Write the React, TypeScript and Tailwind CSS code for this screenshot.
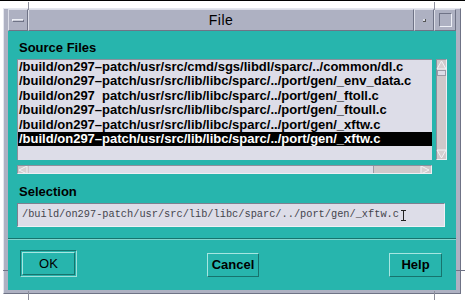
import React from "react";

const files = [
  "/build/on297–patch/usr/src/cmd/sgs/libdl/sparc/../common/dl.c",
  "/build/on297–patch/usr/src/lib/libc/sparc/../port/gen/_env_data.c",
  "/build/on297  patch/usr/src/lib/libc/sparc/../port/gen/_ftoll.c",
  "/build/on297–patch/usr/src/lib/libc/sparc/../port/gen/_ftoull.c",
  "/build/on297–patch/usr/src/lib/libc/sparc/../port/gen/_xftw.c",
  "/build/on297–patch/usr/src/lib/libc/sparc/../port/gen/_xftw.c",
];

const sans = { fontFamily: '"Liberation Sans", Arial, sans-serif' };

function Arrow({ dir }: { dir: "up" | "down" | "left" | "right" }) {
  const pts = {
    up: "1,9 5.5,1 10,9",
    down: "1,1 5.5,9 10,1",
    left: "9,1 1,5 9,9",
    right: "1,1 9,5 1,9",
  }[dir];
  return (
    <svg width="11" height="10" viewBox="0 0 11 10" className="block">
      <polygon points={pts} fill="#d6d0d2" stroke="#f2f2f6" strokeWidth="1" />
    </svg>
  );
}

function TitleButton({ children, className = "" }: { children?: React.ReactNode; className?: string }) {
  return (
    <div
      className={`h-full flex items-center justify-center border-t border-l border-t-[#dcdee8] border-l-[#dcdee8] border-b border-r border-b-[#6f7386] border-r-[#6f7386] ${className}`}
    >
      {children}
    </div>
  );
}

export default function App() {
  return (
    <div className="w-[465px] h-[300px] bg-white border-t border-black relative overflow-hidden" style={sans}>
      {/* window frame */}
      <div className="ml-[3px] mt-[7px] w-[458px] h-[286px] bg-[#aeb1c2] border border-t-[#e4e6ee] border-l-[#e4e6ee] border-b-[#6f7386] border-r-[#6f7386] px-[4px] pb-[3px] flex flex-col">
        {/* title bar */}
        <div className="h-[22px] flex">
          <TitleButton className="w-[20px]">
            <div className="w-[12px] h-[3px] bg-[#c8cad6] border border-t-[#eef0f6] border-l-[#eef0f6] border-b-[#6f7386] border-r-[#6f7386]" />
          </TitleButton>
          <TitleButton className="flex-1">
            <span className="text-[14px] text-black tracking-[0.5px]">File</span>
          </TitleButton>
          <TitleButton className="w-[20px]">
            <div className="w-[3px] h-[3px] bg-[#d8dae4] border-r border-b border-[#555]" />
          </TitleButton>
          <TitleButton className="w-[22px]">
            <div className="w-[13px] h-[14px] border border-t-[#6f7386] border-l-[#6f7386] border-b-[#eef0f6] border-r-[#eef0f6]" />
          </TitleButton>
        </div>

        {/* dialog body */}
        <div className="flex-1 bg-[#27b5ad] px-[9px] flex flex-col text-black">
          <div className="mt-[10px] h-[14px] leading-[14px] text-[13px] font-bold pl-[2px]">Source Files</div>

          <div className="mt-[4px] flex gap-[4px]">
            <div className="w-[415px] h-[101px] bg-[#dddde8] border-t border-l border-[#8d8f9c] overflow-hidden">
              {files.map((f, i) => (
                <div
                  key={i}
                  className={`h-[14.4px] leading-[14.4px] text-[13px] font-bold whitespace-pre pl-[1px] ${
                    i === files.length - 1 ? "bg-black text-white" : "text-black"
                  }`}
                >
                  {f}
                </div>
              ))}
            </div>
            <div className="w-[11px] h-[101px] bg-[#cfc8ca] border border-t-[#8d8f9c] border-l-[#8d8f9c] border-b-[#eeeef3] border-r-[#eeeef3] flex flex-col items-center">
              <Arrow dir="up" />
              <div className="w-[9px] h-[6px] bg-[#dddde8] border border-[#9c9aa6]" />
              <div className="flex-1" />
              <Arrow dir="down" />
            </div>
          </div>

          <div className="mt-[5px] w-[415px] h-[9px] bg-[#cfc8ca] border border-t-[#8d8f9c] border-l-[#8d8f9c] border-b-[#eeeef3] border-r-[#eeeef3] flex items-center overflow-hidden">
            <Arrow dir="left" />
            <div className="w-[345px] h-full bg-[#dddde8] border-r border-[#9c9aa6]" />
            <div className="flex-1" />
            <Arrow dir="right" />
          </div>

          <div className="mt-[11px] h-[14px] leading-[14px] text-[13px] font-bold pl-[2px]">Selection</div>

          <div className="mt-[4px] w-[428px] h-[24px] bg-[#dddde8] border border-t-[#7d8090] border-l-[#7d8090] border-b-[#f0f0f5] border-r-[#f0f0f5] flex items-center pl-[4px]">
            <span
              className="text-[10.3px] text-[#44444c] whitespace-pre"
              style={{ fontFamily: '"Liberation Mono", "Courier New", monospace' }}
            >
              /build/on297-patch/usr/src/lib/libc/sparc/../port/gen/_xftw.c
            </span>
            <span className="ml-[2px] w-[5px] h-[11px] border-t border-b border-[#222] relative">
              <span className="absolute left-[2px] top-0 bottom-0 w-px bg-[#222]" />
            </span>
          </div>

          <div className="mt-[11px] -mx-[9px] h-[2px] border-t border-t-[#17736d] border-b border-b-[#7fd6cf]" />

          <div className="mt-[10px] flex items-end justify-between pl-[3px] pr-[5px]">
            <div className="w-[57px] h-[27px] border border-t-[#17736d] border-l-[#17736d] border-b-[#9fe0da] border-r-[#9fe0da] p-px">
              <div className="w-full h-full border border-t-[#a6e6e1] border-l-[#a6e6e1] border-b-[#17736d] border-r-[#17736d] flex items-center justify-center text-[13px]">
                OK
              </div>
            </div>
            <div className="w-[52px] h-[24px] border border-t-[#a6e6e1] border-l-[#a6e6e1] border-b-[#17736d] border-r-[#17736d] flex items-center justify-center text-[13px] font-bold">
              Cancel
            </div>
            <div className="w-[53px] h-[24px] border border-t-[#a6e6e1] border-l-[#a6e6e1] border-b-[#17736d] border-r-[#17736d] flex items-center justify-center text-[13px] font-bold">
              Help
            </div>
          </div>
        </div>
      </div>

      {/* resize corner ticks on the frame */}
      <div className="absolute left-[28px] top-[1px] w-px h-[8px] bg-[#8d8f9c]" />
      <div className="absolute left-[434px] top-[1px] w-px h-[8px] bg-[#8d8f9c]" />
      <div className="absolute left-[28px] top-[290px] w-px h-[10px] bg-[#8d8f9c]" />
      <div className="absolute left-[434px] top-[290px] w-px h-[10px] bg-[#8d8f9c]" />
      <div className="absolute left-[3px] top-[269px] w-[5px] h-px bg-[#6f7386]" />
      <div className="absolute left-[456px] top-[269px] w-[9px] h-px bg-[#6f7386]" />
    </div>
  );
}
